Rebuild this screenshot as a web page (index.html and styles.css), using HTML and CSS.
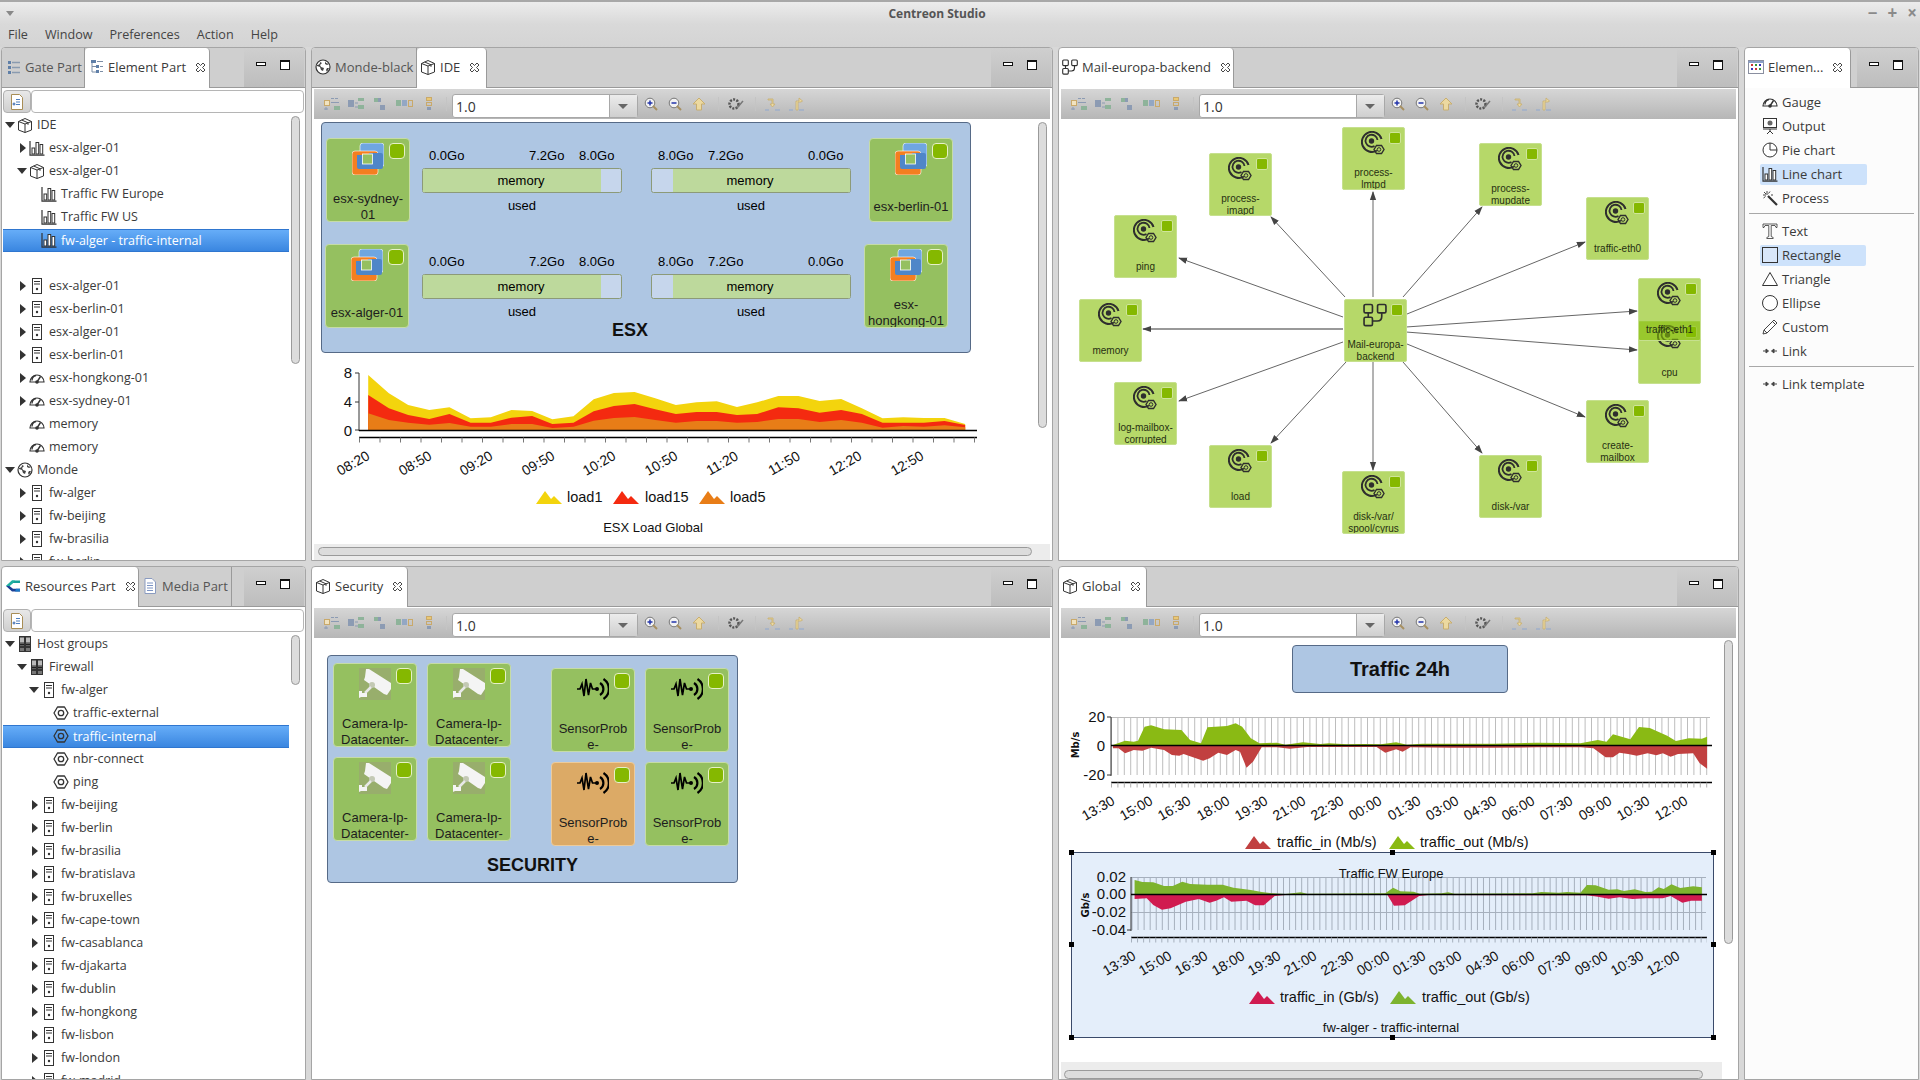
FILE: index.html
```html
<!DOCTYPE html>
<html lang="en">
<head>
  <meta charset="UTF-8" />
  <title>Centreon Studio</title>
  <link rel="stylesheet" href="styles.css">
</head>
<body>

<svg class="defs" width="0" height="0">
  <defs>
    <symbol id="i-close" viewBox="0 0 11 11"><path d="M1 3l2-2 2.500 2.500L8 1l2 2-2.500 2.500L10 8l-2 2-2.500-2.500L3 10 1 8l2.500-2.500z" fill="#fff" stroke="#333" stroke-width=".9"/></symbol>
    <symbol id="i-list" viewBox="0 0 16 16"><g fill="#5f7fa8"><rect x="3" y="2" width="3" height="3"/><rect x="3" y="7" width="3" height="3"/><rect x="3" y="12" width="3" height="3"/></g><path d="M7 3.500h8M7 8.500h8M7 13.500h8" stroke="#8a9bb0" stroke-width="1.300"/></symbol>
    <symbol id="i-tree" viewBox="0 0 16 16"><g fill="#5f7fa8"><rect x="3" y="1" width="5" height="3"/><rect x="8" y="6" width="3" height="3"/><rect x="8" y="11" width="3" height="3"/></g><path d="M4 4v9h4M4 7.500h4M9 2.500h6M12 7.500h3M12 12.500h3" stroke="#7c8ea6" fill="none"/></symbol>
    <symbol id="i-cube" viewBox="0 0 16 16"><path d="M1.500 4.500 8 1.500l6.500 3v8.500L8 15.500 1.500 13zM1.500 4.500 8 7l6.500-2.500M8 7v8.500M4.700 3 11 5.800v2" fill="#fff" stroke="#333" stroke-linejoin="round"/></symbol>
    <symbol id="i-bars" viewBox="0 0 16 16"><path d="M1 1v14.200h14.500" fill="none" stroke="#333" stroke-width="1.200"/><g fill="#fff" stroke="#333"><rect x="3" y="8" width="2.700" height="6"/><rect x="7" y="2.500" width="2.700" height="11.500"/><rect x="11" y="4.500" width="2.700" height="9.500"/></g></symbol>
    <symbol id="i-server" viewBox="0 0 16 16"><rect x="3.500" y=".5" width="9" height="15" fill="#fff" stroke="#333"/><path d="M5 3.500h6M5 6h6" stroke="#333"/><circle cx="8" cy="11" r="1.200" fill="#333"/></symbol>
    <symbol id="i-group" viewBox="0 0 16 16"><rect x="2.500" y=".5" width="5" height="15" fill="#777" stroke="#333"/><rect x="8.500" y=".5" width="5" height="15" fill="#777" stroke="#333"/><path d="M4 2v4M6 2v4M10 2v4M12 2v4" stroke="#fff"/><path d="M3 8.500h4M9 8.500h4M3 11h4M9 11h4" stroke="#222" stroke-width="1.500"/></symbol>
    <symbol id="i-hex" viewBox="0 0 16 16"><path d="M1 8l3.500-6h7L15 8l-3.500 6h-7z" fill="none" stroke="#333" stroke-width="1.300" stroke-linejoin="round"/><circle cx="8" cy="8" r="2.700" fill="none" stroke="#333" stroke-width="1.300"/></symbol>
    <symbol id="i-gauge" viewBox="0 0 16 16"><path d="M1 12a7 7 0 1 1 14 0z" fill="#fff" stroke="#333" stroke-width="1.200"/><path d="M3 10.500a5 5 0 0 1 4-5M8 12l3.500-5.500" fill="none" stroke="#333" stroke-width="1.400"/><circle cx="8" cy="12" r="1.800" fill="#333"/></symbol>
    <symbol id="i-globe" viewBox="0 0 16 16"><circle cx="8" cy="8" r="7" fill="#fff" stroke="#333" stroke-width="1.200"/><path d="M2 6c2 0 3-1 3-3l2 1-2 2 1 2 3 1-1 3-2-1-1-3-3-1zM10 2l1 2 3 1-2 1-2-1zM12 9l2 0-2 4-1-2z" fill="#444"/></symbol>
    <symbol id="i-diagram" viewBox="0 0 16 16"><g fill="none" stroke="#2e2e2e" stroke-width="1.100"><rect x=".7" y="1" width="5.600" height="5.600" rx="1"/><rect x="9.700" y="1" width="5.600" height="5.600" rx="1"/><rect x=".7" y="9.500" width="5.600" height="5.600" rx="1"/><path d="M3.500 6.600v3M12.500 6.600V9q0 3-3 3H6.300"/></g></symbol>
    <symbol id="i-logo" viewBox="0 0 16 16"><path d="M15 2.500H7L1 8l3.500 0L8 5h7z" fill="#16a19a"/><path d="M1 8l6 5.500h8v-2.700H8L4.500 8z" fill="#1c3f94"/><path d="M7 2.500 1 8h3.500L8 5l2-2.500z" fill="#20b0a0"/><path d="M11 10.800h4v2.700h-5z" fill="#1a78c8"/></symbol>
    <symbol id="i-doc" viewBox="0 0 16 16"><path d="M3 .5h7l3.500 3.500v11.500H3z" fill="#fff" stroke="#8a9bc0"/><path d="M5 5h6M5 7.500h6M5 10h6M5 12.500h6" stroke="#7c94c4"/></symbol>
    <symbol id="i-filter" viewBox="0 0 16 16"><path d="M2.500.5h8l3 3v12h-11z" fill="#fff" stroke="#a88d55"/><path d="M7 5.500h4M7 8h4M7 10.500h4" stroke="#4f7fbf"/><path d="M3.500 10h3M5 8.500v3" stroke="#2d5fa8"/></symbol>
    <symbol id="i-output" viewBox="0 0 16 16"><rect x="1.500" y=".5" width="13" height="9" fill="#fff" stroke="#333"/><circle cx="8" cy="5" r="2.500" fill="#666"/><path d="M1 11h14M8 11v2M8 13l-3 3M8 13l3 3" stroke="#333" fill="none"/></symbol>
    <symbol id="i-pie" viewBox="0 0 16 16"><circle cx="8" cy="8" r="7" fill="#fff" stroke="#333"/><path d="M8 1v7h7" fill="none" stroke="#333"/></symbol>
    <symbol id="i-wand" viewBox="0 0 16 16"><path d="M6 6l9 9" stroke="#333" stroke-width="2.200"/><path d="M5 1v4M1 5h3M2 2l2 2M8 1.500l-1.500 2M1.500 8l2-1.500M9 5h2" stroke="#444"/></symbol>
    <symbol id="i-text" viewBox="0 0 16 16"><path d="M1 1h14v3.500h-1L13 2.500H9.200v11l2 1v1H4.800v-1l2-1v-11H3L2 4.500H1z" fill="#fff" stroke="#333" stroke-width=".8"/></symbol>
    <symbol id="i-rect" viewBox="0 0 16 16"><rect x=".5" y=".5" width="15" height="15" fill="#d9e7fa" stroke="#333"/></symbol>
    <symbol id="i-tri" viewBox="0 0 16 16"><path d="M8 1.500l7.500 13H.5z" fill="#fff" stroke="#333"/></symbol>
    <symbol id="i-oval" viewBox="0 0 16 16"><circle cx="8" cy="8" r="7.500" fill="#fff" stroke="#333"/></symbol>
    <symbol id="i-pencil" viewBox="0 0 16 16"><path d="M1 15l1-4L12 1l3 3L5 14zM2 11l3 3M10.500 2.500l3 3" fill="#fff" stroke="#444"/></symbol>
    <symbol id="i-link" viewBox="0 0 16 16"><path d="M1 8h4M11 8h4M6.500 8 4 6v4zM9.500 8 12 6v4z" stroke="#444" fill="#444"/></symbol>
    <symbol id="i-palette" viewBox="0 0 16 16"><rect x=".5" y="1.500" width="15" height="13" fill="#fff" stroke="#8a8fa0"/><path d="M.5 3h15" stroke="#8aa0c8" stroke-width="2"/><g fill="#c33"><rect x="3" y="5" width="2" height="2"/><rect x="7" y="9" width="2" height="2"/></g><g fill="#393"><rect x="7" y="5" width="2" height="2"/><rect x="11" y="9" width="2" height="2"/></g><g fill="#33b"><rect x="11" y="5" width="2" height="2"/><rect x="3" y="9" width="2" height="2"/></g></symbol>

    <symbol id="vmw" viewBox="0 0 32 32"><rect x="8" y="0" width="24" height="24" rx="3" fill="#6fa6e0" stroke="#fff" stroke-width=".6"/><rect x="0" y="8" width="26" height="24" rx="3" fill="#f47f20" stroke="#fff" stroke-width=".6"/><rect x="5" y="10" width="26" height="16" rx="2" fill="#4f86c8"/><rect x="5" y="9" width="12" height="3" fill="#f47f20"/><rect x="10.500" y="11" width="10" height="10" fill="#95c060" stroke="#fff" stroke-width=".8"/></symbol>
    <symbol id="camera" viewBox="0 0 32 32"><rect width="32" height="32" fill="#98ae6c"/><path d="M7 1l3 0 22 14v6l-4 6-3-1L5 12l1-3z" fill="#f4f4f4"/><circle cx="13" cy="17" r="3" fill="#c3c9b4"/><path d="M12 19l-6 6" stroke="#e8e8e8" stroke-width="2.500"/><path d="M0 23h3v2h5v4H2l-2 1z" fill="#f4f4f4"/></symbol>
    <symbol id="sensor" viewBox="0 0 32 22"><path d="M0 11h3l2-5 2 12 2-17 2.500 16 2-12 2 6h5" fill="none" stroke="#000" stroke-width="1.700"/><circle cx="20" cy="11" r="2" fill="#000"/><path d="M23 5a7 7 0 0 1 0 12M26.500 1a12 12 0 0 1 0 20" fill="none" stroke="#000" stroke-width="2.200"/></symbol>
    <symbol id="svc" viewBox="0 0 24 24"><path d="M16 19.500A10 10 0 1 1 20.500 8" fill="none" stroke="#2e2e2e" stroke-width="2"/><path d="M13.500 15A6 6 0 1 1 16.500 9" fill="none" stroke="#2e2e2e" stroke-width="1.800"/><circle cx="10.500" cy="10" r="2.700" fill="#2e2e2e"/><path d="M13 18.500l2.500-4h5l2.500 4-2.500 4h-5z" fill="none" stroke="#2e2e2e" stroke-width="1.400"/><circle cx="18" cy="18.500" r="1.800" fill="none" stroke="#2e2e2e"/></symbol>

    <symbol id="tb-layout" viewBox="0 0 108 14"><g fill="none" stroke="#c9a96a"><rect x=".5" y="3.500" width="5" height="5" fill="#f1e3c0"/><rect x="84.500" y="3.500" width="4" height="6"/><rect x="102.500" y=".5" width="5" height="3" fill="#eac874"/><rect x="102.500" y="5.500" width="5" height="3"/></g><g fill="#8c9bb3"><rect x="7" y="1" width="3" height="1"/><rect x="11" y="1" width="3" height="1"/><rect x="7" y="5" width="8" height="1"/><rect x="24" y="3" width="6" height="7"/><rect x="53" y="1" width="4" height="4"/><rect x="56" y="8" width="5" height="5"/><rect x="103" y="10" width="4" height="3"/></g><g fill="#8eb39a"><rect x="10" y="9" width="6" height="4"/><rect x="34" y="1" width="6" height="3"/><rect x="34" y="8" width="6" height="4"/><rect x="50" y="1" width="4" height="4"/><rect x="72" y="3" width="5" height="6"/></g><g fill="#93a7c4"><rect x="78" y="3" width="5" height="6"/></g><path d="M2 10v3M0 12h4M31 6h3M31 10h3" stroke="#8c9bb3" fill="none"/></symbol>
    <symbol id="tb-zoomin" viewBox="0 0 14 14"><circle cx="6" cy="6" r="4.800" fill="#f2f2f2" stroke="#777"/><path d="M9 9l4 4" stroke="#a89060" stroke-width="2"/><path d="M3.500 6h5M6 3.500v5" stroke="#2233aa" stroke-width="1.500"/></symbol>
    <symbol id="tb-zoomout" viewBox="0 0 14 14"><circle cx="6" cy="6" r="4.800" fill="#f2f2f2" stroke="#777"/><path d="M9 9l4 4" stroke="#a89060" stroke-width="2"/><path d="M3.500 6h5" stroke="#2233aa" stroke-width="1.500"/></symbol>
    <symbol id="tb-up" viewBox="0 0 14 14"><path d="M7 1l6 6H9.500v6h-5V7H1z" fill="#ecd9a0" stroke="#c8ae70"/></symbol>
    <symbol id="tb-gear" viewBox="0 0 16 12"><circle cx="6" cy="6" r="4.500" fill="none" stroke="#555" stroke-width="2.500" stroke-dasharray="2 1.300"/><path d="M9 10l6-7" stroke="#777" stroke-width="1.500"/></symbol>
    <symbol id="tb-down" viewBox="0 0 15 14"><path d="M3 2h5v5h2l-2.500 3L5 7h2V3H3z" fill="#ecd9a0" stroke="#c8ae70" stroke-width=".8"/><path d="M0 13h4M10 13h5" stroke="#8fa8d0"/></symbol>
    <symbol id="tb-back" viewBox="0 0 15 14"><path d="M12 5H9v8H7V4h3V1l3.500 3z" fill="#ecd9a0" stroke="#c8ae70" stroke-width=".8"/><path d="M0 13h4M10 13h5" stroke="#8fa8d0"/></symbol>

    <g id="gauge-left">
      <text x="429" y="160">0.0Go</text><text x="529" y="160">7.2Go</text><text x="579" y="160">8.0Go</text>
      <rect x="422.500" y="168.500" width="199" height="24" rx="2" fill="#c6d6ec" stroke="#8c9a78"/>
      <rect x="423" y="169" width="178" height="23" fill="#bdd99c"/>
      <text x="521" y="185" text-anchor="middle">memory</text><text x="522" y="210" text-anchor="middle">used</text>
    </g>
    <g id="gauge-right">
      <text x="658" y="160">8.0Go</text><text x="708" y="160">7.2Go</text><text x="808" y="160">0.0Go</text>
      <rect x="651.500" y="168.500" width="199" height="24" rx="2" fill="#c6d6ec" stroke="#8c9a78"/>
      <rect x="673" y="169" width="177" height="23" fill="#bdd99c"/>
      <text x="750" y="185" text-anchor="middle">memory</text><text x="751" y="210" text-anchor="middle">used</text>
    </g>
    <marker id="arrow" viewBox="0 0 10 10" refX="9" refY="5" markerWidth="9" markerHeight="9" orient="auto" markerUnits="userSpaceOnUse"><path d="M0 1.500 10 5 0 8.500z" fill="#444"/></marker>
    <path id="peak" d="M0 13 9 0l6 8 3-3 8 8z"/>
  </defs>
</svg>

<header class="titlebar">
  <span class="title-menu"></span>
  <span class="title-text">Centreon Studio</span>
  <div class="win-buttons"><span>−</span><span>+</span><span>×</span></div>
</header>

<nav class="menubar">
  <span>File</span><span>Window</span><span>Preferences</span><span>Action</span><span>Help</span>
</nav>

<main class="workspace">

  <!-- left top -->
  <section class="pane">
    <div class="tabbar">
      <div class="tab tab-gate"><svg class="ic"><use href="#i-list"/></svg>Gate Part</div>
      <div class="tab active tab-element"><svg class="ic"><use href="#i-tree"/></svg>Element Part<svg class="close"><use href="#i-close"/></svg></div>
      <div class="pane-ctrl"><span class="min"></span><span class="max"></span></div>
    </div>
    <div class="view-body">
      <div class="filter"><button class="filter-btn"><svg class="ic"><use href="#i-filter"/></svg></button><input class="filter-input" type="text" /></div>
      <div class="tree">
        <div class="row l0"><span class="arrow open"></span><svg class="ic"><use href="#i-cube"/></svg>IDE</div>
        <div class="row l1"><span class="arrow closed"></span><svg class="ic"><use href="#i-bars"/></svg>esx-alger-01</div>
        <div class="row l1"><span class="arrow open"></span><svg class="ic"><use href="#i-cube"/></svg>esx-alger-01</div>
        <div class="row l2"><span class="arrow"></span><svg class="ic"><use href="#i-bars"/></svg>Traffic FW Europe</div>
        <div class="row l2"><span class="arrow"></span><svg class="ic"><use href="#i-bars"/></svg>Traffic FW US</div>
        <div class="row l2 selected"><span class="arrow"></span><svg class="ic"><use href="#i-bars"/></svg>fw-alger - traffic-internal</div>
        <div class="row l1"></div>
        <div class="row l1"><span class="arrow closed"></span><svg class="ic"><use href="#i-server"/></svg>esx-alger-01</div>
        <div class="row l1"><span class="arrow closed"></span><svg class="ic"><use href="#i-server"/></svg>esx-berlin-01</div>
        <div class="row l1"><span class="arrow closed"></span><svg class="ic"><use href="#i-server"/></svg>esx-alger-01</div>
        <div class="row l1"><span class="arrow closed"></span><svg class="ic"><use href="#i-server"/></svg>esx-berlin-01</div>
        <div class="row l1"><span class="arrow closed"></span><svg class="ic"><use href="#i-gauge"/></svg>esx-hongkong-01</div>
        <div class="row l1"><span class="arrow closed"></span><svg class="ic"><use href="#i-gauge"/></svg>esx-sydney-01</div>
        <div class="row l1"><span class="arrow"></span><svg class="ic"><use href="#i-gauge"/></svg>memory</div>
        <div class="row l1"><span class="arrow"></span><svg class="ic"><use href="#i-gauge"/></svg>memory</div>
        <div class="row l0"><span class="arrow open"></span><svg class="ic"><use href="#i-globe"/></svg>Monde</div>
        <div class="row l1"><span class="arrow closed"></span><svg class="ic"><use href="#i-server"/></svg>fw-alger</div>
        <div class="row l1"><span class="arrow closed"></span><svg class="ic"><use href="#i-server"/></svg>fw-beijing</div>
        <div class="row l1"><span class="arrow closed"></span><svg class="ic"><use href="#i-server"/></svg>fw-brasilia</div>
        <div class="row l1"><span class="arrow closed"></span><svg class="ic"><use href="#i-server"/></svg>fw-berlin</div>
      </div>
      <div class="scroll-v sv-left-top"></div>
    </div>
  </section>

  <!-- center top -->
  <section class="pane">
    <div class="tabbar">
      <div class="tab tab-monde"><svg class="ic"><use href="#i-globe"/></svg>Monde-black</div>
      <div class="tab active tab-ide"><svg class="ic"><use href="#i-cube"/></svg>IDE<svg class="close"><use href="#i-close"/></svg></div>
      <div class="pane-ctrl"><span class="min"></span><span class="max"></span></div>
    </div>
    <div class="view-body">
      <div class="toolbar">
        <svg class="tb-layout"><use href="#tb-layout"/></svg><span class="tb-sep first"></span>
        <div class="combo"><span class="combo-value">1.0</span><span class="combo-arrow"></span></div>
        <svg class="tb"><use href="#tb-zoomin"/></svg><svg class="tb"><use href="#tb-zoomout"/></svg><svg class="tb"><use href="#tb-up"/></svg>
        <span class="tb-sep"></span><svg class="tb-gear"><use href="#tb-gear"/></svg><span class="tb-sep"></span>
        <svg class="tb-move"><use href="#tb-down"/></svg><svg class="tb-move"><use href="#tb-back"/></svg>
      </div>
      <div class="canvas">
        <div class="group g-esx"></div>
        <div class="node big n-sydney"><svg class="node-icon"><use href="#vmw"/></svg><span class="status"></span><div class="node-label">esx-sydney-<br>01</div></div>
        <div class="node big n-alger"><svg class="node-icon"><use href="#vmw"/></svg><span class="status"></span><div class="node-label">esx-alger-01</div></div>
        <div class="node big n-berlin"><svg class="node-icon"><use href="#vmw"/></svg><span class="status"></span><div class="node-label">esx-berlin-01</div></div>
        <div class="node big n-hongkong"><svg class="node-icon"><use href="#vmw"/></svg><span class="status"></span><div class="node-label">esx-<br>hongkong-01</div></div>

        <svg class="overlay" viewBox="314 119 736 442" width="736" height="442">
          <g class="diagram-text">
            <use href="#gauge-left"/><use href="#gauge-right"/>
            <use href="#gauge-left" y="106"/><use href="#gauge-right" y="106"/>
            <text class="group-title" x="630" y="336" text-anchor="middle">ESX</text>
          </g>
          <g transform="translate(320 350) scale(.4592 .3333)">
            <polygon fill="#f3d40d" points="105,75 150,130 192,165 238,180 282,172 328,205 372,202 417,180 462,183 506,208 552,199 596,148 640,129 685,126 730,145 775,165 820,157 864,154 908,171 952,157 998,138 1042,138 1088,153 1135,147 1180,175 1225,205 1270,202 1315,204 1360,204 1405,222 1405,240 105,240"/>
            <polygon fill="#f42a10" points="105,135 150,175 192,195 238,207 282,192 328,218 372,218 417,203 462,198 506,222 552,218 596,184 640,168 685,162 730,178 775,192 820,186 864,186 908,195 952,192 998,172 1042,175 1088,188 1135,180 1180,192 1225,218 1270,218 1315,218 1360,213 1405,225 1405,240 105,240"/>
            <polygon fill="#e87d17" points="105,190 150,210 192,218 238,224 282,219 328,230 372,230 417,222 462,222 506,234 552,230 596,212 640,204 685,201 730,210 775,218 820,213 864,213 908,218 952,216 998,207 1042,207 1088,216 1135,210 1180,218 1225,233 1270,228 1315,230 1360,226 1405,232 1405,240 105,240"/>
          </g>
          <g class="axis">
            <path d="M359 373V431M355 373h4M355 402h4M355 430h4"/>
            <path class="axis-main" d="M359 430.500H977M359 437.500H977"/>
            <line class="ticks" x1="359" y1="440" x2="977" y2="440" stroke-width="5" stroke-dasharray="1 19.500"/>
          </g>
          <g class="chart-text">
            <text class="yl" x="352" y="378">8</text><text class="yl" x="352" y="407">4</text><text class="yl" x="352" y="436">0</text>
            <text class="xl" transform="rotate(-30 353 463)" x="353" y="468">08:20</text>
            <text class="xl" transform="rotate(-30 415 463)" x="415" y="468">08:50</text>
            <text class="xl" transform="rotate(-30 476 463)" x="476" y="468">09:20</text>
            <text class="xl" transform="rotate(-30 538 463)" x="538" y="468">09:50</text>
            <text class="xl" transform="rotate(-30 599 463)" x="599" y="468">10:20</text>
            <text class="xl" transform="rotate(-30 661 463)" x="661" y="468">10:50</text>
            <text class="xl" transform="rotate(-30 722 463)" x="722" y="468">11:20</text>
            <text class="xl" transform="rotate(-30 784 463)" x="784" y="468">11:50</text>
            <text class="xl" transform="rotate(-30 845 463)" x="845" y="468">12:20</text>
            <text class="xl" transform="rotate(-30 907 463)" x="907" y="468">12:50</text>
            <use href="#peak" x="536" y="491" fill="#f3d40d"/><text class="lg" x="567" y="502">load1</text>
            <use href="#peak" x="613" y="491" fill="#f42a10"/><text class="lg" x="645" y="502">load15</text>
            <use href="#peak" x="699" y="491" fill="#e87d17"/><text class="lg" x="730" y="502">load5</text>
            <text class="cap" x="653" y="532">ESX Load Global</text>
          </g>
        </svg>

        <div class="scroll-v sv-center"></div>
        <div class="band"></div>
        <div class="scroll-h sh-center"></div>
      </div>
    </div>
  </section>

  <!-- right top -->
  <section class="pane">
    <div class="tabbar">
      <div class="tab active tab-mail"><svg class="ic"><use href="#i-diagram"/></svg>Mail-europa-backend<svg class="close"><use href="#i-close"/></svg></div>
      <div class="pane-ctrl"><span class="min"></span><span class="max"></span></div>
    </div>
    <div class="view-body">
      <div class="toolbar">
        <svg class="tb-layout"><use href="#tb-layout"/></svg><span class="tb-sep first"></span>
        <div class="combo"><span class="combo-value">1.0</span><span class="combo-arrow"></span></div>
        <svg class="tb"><use href="#tb-zoomin"/></svg><svg class="tb"><use href="#tb-zoomout"/></svg><svg class="tb"><use href="#tb-up"/></svg>
        <span class="tb-sep"></span><svg class="tb-gear"><use href="#tb-gear"/></svg><span class="tb-sep"></span>
        <svg class="tb-move"><use href="#tb-down"/></svg><svg class="tb-move"><use href="#tb-back"/></svg>
      </div>
      <div class="canvas">
        <svg class="overlay" viewBox="1061 119 675 442" width="675" height="442">
          <g class="edges">
            <line x1="1373" y1="297" x2="1373" y2="192" marker-end="url(#arrow)"/>
            <line x1="1345" y1="297" x2="1271" y2="217" marker-end="url(#arrow)"/>
            <line x1="1403" y1="297" x2="1482" y2="207" marker-end="url(#arrow)"/>
            <line x1="1407" y1="314" x2="1585" y2="242" marker-end="url(#arrow)"/>
            <line x1="1343" y1="317" x2="1179" y2="258" marker-end="url(#arrow)"/>
            <line class="heavy" x1="1343" y1="329" x2="1143" y2="329" marker-end="url(#arrow)"/>
            <line x1="1406" y1="327" x2="1637" y2="311" marker-end="url(#arrow)"/>
            <line x1="1406" y1="332" x2="1637" y2="350" marker-end="url(#arrow)"/>
            <line x1="1343" y1="342" x2="1179" y2="401" marker-end="url(#arrow)"/>
            <line x1="1407" y1="344" x2="1585" y2="417" marker-end="url(#arrow)"/>
            <line x1="1346" y1="362" x2="1271" y2="443" marker-end="url(#arrow)"/>
            <line x1="1373" y1="362" x2="1373" y2="470" marker-end="url(#arrow)"/>
            <line x1="1403" y1="362" x2="1482" y2="453" marker-end="url(#arrow)"/>
          </g>
        </svg>
        <div class="node small s-lmtpd"><svg class="svc-icon"><use href="#svc"/></svg><span class="status"></span><div class="node-label">process-<br>lmtpd</div></div>
        <div class="node small s-imapd"><svg class="svc-icon"><use href="#svc"/></svg><span class="status"></span><div class="node-label">process-<br>imapd</div></div>
        <div class="node small s-mupdate"><svg class="svc-icon"><use href="#svc"/></svg><span class="status"></span><div class="node-label">process-<br>mupdate</div></div>
        <div class="node small s-eth0"><svg class="svc-icon"><use href="#svc"/></svg><span class="status"></span><div class="node-label">traffic-eth0</div></div>
        <div class="node small s-ping"><svg class="svc-icon"><use href="#svc"/></svg><span class="status"></span><div class="node-label">ping</div></div>
        <div class="node small s-memory"><svg class="svc-icon"><use href="#svc"/></svg><span class="status"></span><div class="node-label">memory</div></div>
        <div class="node small s-mail"><svg class="svc-icon"><use href="#i-diagram"/></svg><span class="status"></span><div class="node-label">Mail-europa-<br>backend</div></div>
        <div class="node small s-cpu"><svg class="svc-icon"><use href="#svc"/></svg><span class="status"></span><div class="node-label">cpu</div></div>
        <div class="node small s-eth1"><svg class="svc-icon"><use href="#svc"/></svg><span class="status"></span><div class="node-label">traffic-eth1</div></div>
        <div class="node small s-log"><svg class="svc-icon"><use href="#svc"/></svg><span class="status"></span><div class="node-label">log-mailbox-<br>corrupted</div></div>
        <div class="node small s-create"><svg class="svc-icon"><use href="#svc"/></svg><span class="status"></span><div class="node-label">create-<br>mailbox</div></div>
        <div class="node small s-load"><svg class="svc-icon"><use href="#svc"/></svg><span class="status"></span><div class="node-label">load</div></div>
        <div class="node small s-cyrus"><svg class="svc-icon"><use href="#svc"/></svg><span class="status"></span><div class="node-label">disk-/var/<br>spool/cyrus</div></div>
        <div class="node small s-var"><svg class="svc-icon"><use href="#svc"/></svg><span class="status"></span><div class="node-label">disk-/var</div></div>
      </div>
    </div>
  </section>

  <!-- palette, full height -->
  <aside class="pane palette-pane">
    <div class="tabbar">
      <div class="tab active tab-palette"><svg class="ic"><use href="#i-palette"/></svg>Elemen...<svg class="close"><use href="#i-close"/></svg></div>
      <div class="pane-ctrl"><span class="min"></span><span class="max"></span></div>
    </div>
    <div class="palette">
      <div class="pal-item"><svg class="ic"><use href="#i-gauge"/></svg>Gauge</div>
      <div class="pal-item"><svg class="ic"><use href="#i-output"/></svg>Output</div>
      <div class="pal-item"><svg class="ic"><use href="#i-pie"/></svg>Pie chart</div>
      <div class="pal-item hl hl-line"><svg class="ic"><use href="#i-bars"/></svg>Line chart</div>
      <div class="pal-item"><svg class="ic"><use href="#i-wand"/></svg>Process</div>
      <div class="pal-sep"></div>
      <div class="pal-item"><svg class="ic"><use href="#i-text"/></svg>Text</div>
      <div class="pal-item hl hl-rect"><svg class="ic"><use href="#i-rect"/></svg>Rectangle</div>
      <div class="pal-item"><svg class="ic"><use href="#i-tri"/></svg>Triangle</div>
      <div class="pal-item"><svg class="ic"><use href="#i-oval"/></svg>Ellipse</div>
      <div class="pal-item"><svg class="ic"><use href="#i-pencil"/></svg>Custom</div>
      <div class="pal-item"><svg class="ic"><use href="#i-link"/></svg>Link</div>
      <div class="pal-sep"></div>
      <div class="pal-item"><svg class="ic"><use href="#i-link"/></svg>Link template</div>
    </div>
  </aside>

  <!-- left bottom -->
  <section class="pane">
    <div class="tabbar">
      <div class="tab active tab-res"><svg class="ic"><use href="#i-logo"/></svg>Resources Part<svg class="close"><use href="#i-close"/></svg></div>
      <div class="tab tab-media"><svg class="ic"><use href="#i-doc"/></svg>Media Part</div>
      <div class="pane-ctrl"><span class="min"></span><span class="max"></span></div>
    </div>
    <div class="view-body">
      <div class="filter"><button class="filter-btn"><svg class="ic"><use href="#i-filter"/></svg></button><input class="filter-input" type="text" /></div>
      <div class="tree">
        <div class="row l0"><span class="arrow open"></span><svg class="ic"><use href="#i-group"/></svg>Host groups</div>
        <div class="row l1"><span class="arrow open"></span><svg class="ic"><use href="#i-group"/></svg>Firewall</div>
        <div class="row l2"><span class="arrow open"></span><svg class="ic"><use href="#i-server"/></svg>fw-alger</div>
        <div class="row l3"><span class="arrow"></span><svg class="ic"><use href="#i-hex"/></svg>traffic-external</div>
        <div class="row l3 selected"><span class="arrow"></span><svg class="ic"><use href="#i-hex"/></svg>traffic-internal</div>
        <div class="row l3"><span class="arrow"></span><svg class="ic"><use href="#i-hex"/></svg>nbr-connect</div>
        <div class="row l3"><span class="arrow"></span><svg class="ic"><use href="#i-hex"/></svg>ping</div>
        <div class="row l2"><span class="arrow closed"></span><svg class="ic"><use href="#i-server"/></svg>fw-beijing</div>
        <div class="row l2"><span class="arrow closed"></span><svg class="ic"><use href="#i-server"/></svg>fw-berlin</div>
        <div class="row l2"><span class="arrow closed"></span><svg class="ic"><use href="#i-server"/></svg>fw-brasilia</div>
        <div class="row l2"><span class="arrow closed"></span><svg class="ic"><use href="#i-server"/></svg>fw-bratislava</div>
        <div class="row l2"><span class="arrow closed"></span><svg class="ic"><use href="#i-server"/></svg>fw-bruxelles</div>
        <div class="row l2"><span class="arrow closed"></span><svg class="ic"><use href="#i-server"/></svg>fw-cape-town</div>
        <div class="row l2"><span class="arrow closed"></span><svg class="ic"><use href="#i-server"/></svg>fw-casablanca</div>
        <div class="row l2"><span class="arrow closed"></span><svg class="ic"><use href="#i-server"/></svg>fw-djakarta</div>
        <div class="row l2"><span class="arrow closed"></span><svg class="ic"><use href="#i-server"/></svg>fw-dublin</div>
        <div class="row l2"><span class="arrow closed"></span><svg class="ic"><use href="#i-server"/></svg>fw-hongkong</div>
        <div class="row l2"><span class="arrow closed"></span><svg class="ic"><use href="#i-server"/></svg>fw-lisbon</div>
        <div class="row l2"><span class="arrow closed"></span><svg class="ic"><use href="#i-server"/></svg>fw-london</div>
        <div class="row l2"><span class="arrow closed"></span><svg class="ic"><use href="#i-server"/></svg>fw-madrid</div>
      </div>
      <div class="scroll-v sv-left-bottom"></div>
    </div>
  </section>

  <!-- center bottom -->
  <section class="pane">
    <div class="tabbar">
      <div class="tab active tab-security"><svg class="ic"><use href="#i-cube"/></svg>Security<svg class="close"><use href="#i-close"/></svg></div>
      <div class="pane-ctrl"><span class="min"></span><span class="max"></span></div>
    </div>
    <div class="view-body">
      <div class="toolbar">
        <svg class="tb-layout"><use href="#tb-layout"/></svg><span class="tb-sep first"></span>
        <div class="combo"><span class="combo-value">1.0</span><span class="combo-arrow"></span></div>
        <svg class="tb"><use href="#tb-zoomin"/></svg><svg class="tb"><use href="#tb-zoomout"/></svg><svg class="tb"><use href="#tb-up"/></svg>
        <span class="tb-sep"></span><svg class="tb-gear"><use href="#tb-gear"/></svg><span class="tb-sep"></span>
        <svg class="tb-move"><use href="#tb-down"/></svg><svg class="tb-move"><use href="#tb-back"/></svg>
      </div>
      <div class="canvas">
        <div class="group g-security"></div>
        <div class="node big c-1"><svg class="node-icon"><use href="#camera"/></svg><span class="status"></span><div class="node-label">Camera-Ip-<br>Datacenter-</div></div>
        <div class="node big c-2"><svg class="node-icon"><use href="#camera"/></svg><span class="status"></span><div class="node-label">Camera-Ip-<br>Datacenter-</div></div>
        <div class="node big c-3"><svg class="node-icon"><use href="#camera"/></svg><span class="status"></span><div class="node-label">Camera-Ip-<br>Datacenter-</div></div>
        <div class="node big c-4"><svg class="node-icon"><use href="#camera"/></svg><span class="status"></span><div class="node-label">Camera-Ip-<br>Datacenter-</div></div>
        <div class="node big p-1"><svg class="sensor-icon"><use href="#sensor"/></svg><span class="status"></span><div class="node-label">SensorProb<br>e-</div></div>
        <div class="node big p-2"><svg class="sensor-icon"><use href="#sensor"/></svg><span class="status"></span><div class="node-label">SensorProb<br>e-</div></div>
        <div class="node big warn p-3"><svg class="sensor-icon"><use href="#sensor"/></svg><span class="status"></span><div class="node-label">SensorProb<br>e-</div></div>
        <div class="node big p-4"><svg class="sensor-icon"><use href="#sensor"/></svg><span class="status"></span><div class="node-label">SensorProb<br>e-</div></div>
        <div class="group-label l-security">SECURITY</div>
      </div>
    </div>
  </section>

  <!-- right bottom -->
  <section class="pane">
    <div class="tabbar">
      <div class="tab active tab-global"><svg class="ic"><use href="#i-cube"/></svg>Global<svg class="close"><use href="#i-close"/></svg></div>
      <div class="pane-ctrl"><span class="min"></span><span class="max"></span></div>
    </div>
    <div class="view-body">
      <div class="toolbar">
        <svg class="tb-layout"><use href="#tb-layout"/></svg><span class="tb-sep first"></span>
        <div class="combo"><span class="combo-value">1.0</span><span class="combo-arrow"></span></div>
        <svg class="tb"><use href="#tb-zoomin"/></svg><svg class="tb"><use href="#tb-zoomout"/></svg><svg class="tb"><use href="#tb-up"/></svg>
        <span class="tb-sep"></span><svg class="tb-gear"><use href="#tb-gear"/></svg><span class="tb-sep"></span>
        <svg class="tb-move"><use href="#tb-down"/></svg><svg class="tb-move"><use href="#tb-back"/></svg>
      </div>
      <div class="canvas">
        <div class="group title-box">Traffic 24h</div>
        <svg class="overlay" viewBox="1061 638 675 442" width="675" height="442">
          <!-- Traffic 24h chart -->
          <line class="grid" x1="1111" y1="746" x2="1710" y2="746" stroke-width="58" stroke-dasharray="1 5.400"/>
          <path class="grid-h" d="M1111 717.500H1710"/>
          <g transform="translate(1060 640) scale(.4337 .3333)">
            <polygon fill="#8aba14" points="122,315 150,302 170,305 180,302 195,260 210,256 240,268 280,270 300,300 325,310 340,262 385,258 405,250 420,260 440,295 460,310 500,308 520,314 560,307 600,312 620,310 660,313 700,312 740,313 775,307 800,314 835,311 900,311 1000,311 1100,308 1200,310 1240,300 1260,305 1275,283 1315,298 1335,261 1360,264 1400,287 1420,303 1450,295 1480,296 1492,290 1492,317 122,317"/>
            <polygon fill="#c14040" points="122,317 122,325 135,325 150,340 170,330 190,332 210,323 240,330 258,345 275,347 285,342 330,362 345,355 365,338 385,345 405,330 415,335 430,383 445,365 465,322 500,322 530,326 570,321 730,321 750,338 775,328 790,335 808,322 900,323 1000,323 1100,322 1200,322 1230,325 1258,352 1275,352 1290,338 1310,342 1330,347 1355,340 1375,346 1390,340 1408,350 1425,342 1460,340 1475,370 1492,386 1492,317"/>
          </g>
          <g class="axis">
            <path d="M1111 717V776M1107 717h4M1107 775h4"/>
            <path class="axis-main" d="M1111 745.500H1712M1111 782.500H1712"/>
          </g>
          <line class="ticks light" x1="1111" y1="785" x2="1712" y2="785" stroke-width="5" stroke-dasharray="1 5.400"/>
          <g class="chart-text">
            <text class="yl" x="1105" y="722">20</text><text class="yl" x="1105" y="751">0</text><text class="yl" x="1105" y="780">-20</text>
            <text class="unit" transform="rotate(-90 1075 745)" x="1075" y="749">Mb/s</text>
            <text class="xl" transform="rotate(-30 1098 808)" x="1098" y="813">13:30</text>
            <text class="xl" transform="rotate(-30 1136 808)" x="1136" y="813">15:00</text>
            <text class="xl" transform="rotate(-30 1174 808)" x="1174" y="813">16:30</text>
            <text class="xl" transform="rotate(-30 1213 808)" x="1213" y="813">18:00</text>
            <text class="xl" transform="rotate(-30 1251 808)" x="1251" y="813">19:30</text>
            <text class="xl" transform="rotate(-30 1289 808)" x="1289" y="813">21:00</text>
            <text class="xl" transform="rotate(-30 1327 808)" x="1327" y="813">22:30</text>
            <text class="xl" transform="rotate(-30 1365 808)" x="1365" y="813">00:00</text>
            <text class="xl" transform="rotate(-30 1404 808)" x="1404" y="813">01:30</text>
            <text class="xl" transform="rotate(-30 1442 808)" x="1442" y="813">03:00</text>
            <text class="xl" transform="rotate(-30 1480 808)" x="1480" y="813">04:30</text>
            <text class="xl" transform="rotate(-30 1518 808)" x="1518" y="813">06:00</text>
            <text class="xl" transform="rotate(-30 1556 808)" x="1556" y="813">07:30</text>
            <text class="xl" transform="rotate(-30 1595 808)" x="1595" y="813">09:00</text>
            <text class="xl" transform="rotate(-30 1633 808)" x="1633" y="813">10:30</text>
            <text class="xl" transform="rotate(-30 1671 808)" x="1671" y="813">12:00</text>
            <use href="#peak" x="1245" y="836" fill="#c14040"/><text class="lg" x="1277" y="847">traffic_in (Mb/s)</text>
            <use href="#peak" x="1389" y="836" fill="#8aba14"/><text class="lg" x="1420" y="847">traffic_out (Mb/s)</text>
          </g>

          <!-- selected chart -->
          <rect class="sel-box" x="1071.500" y="852.500" width="642" height="185"/>
          <line class="grid dim" x1="1131.500" y1="903.500" x2="1706" y2="903.500" stroke-width="53" stroke-dasharray="1 5.060"/>
          <path class="grid-h dim" d="M1131 877.500H1706M1131 912.500H1706"/>
          <g transform="translate(1060 840) scale(.4337 .3333)">
            <polygon fill="#d01b50" points="172,163 172,177 200,175 215,195 235,209 255,205 290,185 320,177 345,188 360,182 378,172 395,185 430,182 450,196 470,196 495,168 520,165 755,165 770,197 795,196 828,168 850,165 1215,166 1240,170 1265,176 1290,172 1320,177 1350,175 1390,175 1408,168 1435,188 1455,182 1480,182 1480,163"/>
            <polygon fill="#7db32e" points="172,120 190,126 215,127 240,138 260,138 282,125 300,132 340,134 375,134 400,143 440,150 465,156 490,160 520,162 555,157 570,161 750,160 768,143 785,154 815,155 830,161 880,160 895,157 910,161 1090,160 1110,156 1150,158 1170,156 1200,158 1215,135 1235,136 1265,149 1285,148 1300,153 1325,148 1350,156 1365,155 1380,142 1392,147 1410,133 1430,144 1460,139 1480,142 1480,163 172,163"/>
          </g>
          <g class="axis">
            <path d="M1131 877V931M1127 930h4"/>
            <path class="axis-main" d="M1131 894.500H1707M1131 937.500H1707"/>
          </g>
          <line class="ticks dim" x1="1131" y1="940" x2="1707" y2="940" stroke-width="5" stroke-dasharray="1 5.060"/>
          <g class="chart-text">
            <text class="cap" x="1391" y="878">Traffic FW Europe</text>
            <text class="yl" x="1126" y="882">0.02</text><text class="yl" x="1126" y="899">0.00</text><text class="yl" x="1126" y="917">-0.02</text><text class="yl" x="1126" y="935">-0.04</text>
            <text class="unit" transform="rotate(-90 1085 905)" x="1085" y="909">Gb/s</text>
            <text class="xl" transform="rotate(-30 1119 963)" x="1119" y="968">13:30</text>
            <text class="xl" transform="rotate(-30 1155 963)" x="1155" y="968">15:00</text>
            <text class="xl" transform="rotate(-30 1191 963)" x="1191" y="968">16:30</text>
            <text class="xl" transform="rotate(-30 1228 963)" x="1228" y="968">18:00</text>
            <text class="xl" transform="rotate(-30 1264 963)" x="1264" y="968">19:30</text>
            <text class="xl" transform="rotate(-30 1300 963)" x="1300" y="968">21:00</text>
            <text class="xl" transform="rotate(-30 1337 963)" x="1337" y="968">22:30</text>
            <text class="xl" transform="rotate(-30 1373 963)" x="1373" y="968">00:00</text>
            <text class="xl" transform="rotate(-30 1409 963)" x="1409" y="968">01:30</text>
            <text class="xl" transform="rotate(-30 1445 963)" x="1445" y="968">03:00</text>
            <text class="xl" transform="rotate(-30 1482 963)" x="1482" y="968">04:30</text>
            <text class="xl" transform="rotate(-30 1518 963)" x="1518" y="968">06:00</text>
            <text class="xl" transform="rotate(-30 1554 963)" x="1554" y="968">07:30</text>
            <text class="xl" transform="rotate(-30 1591 963)" x="1591" y="968">09:00</text>
            <text class="xl" transform="rotate(-30 1627 963)" x="1627" y="968">10:30</text>
            <text class="xl" transform="rotate(-30 1663 963)" x="1663" y="968">12:00</text>
            <use href="#peak" x="1249" y="991" fill="#d01b50"/><text class="lg" x="1280" y="1002">traffic_in (Gb/s)</text>
            <use href="#peak" x="1390" y="991" fill="#7db32e"/><text class="lg" x="1422" y="1002">traffic_out (Gb/s)</text>
            <text class="cap" x="1391" y="1032">fw-alger - traffic-internal</text>
          </g>
          <g class="handles">
            <rect x="1069" y="850" width="5" height="5"/><rect x="1390" y="850" width="5" height="5"/><rect x="1711" y="850" width="5" height="5"/>
            <rect x="1069" y="942" width="5" height="5"/><rect x="1711" y="942" width="5" height="5"/>
            <rect x="1069" y="1035" width="5" height="5"/><rect x="1390" y="1035" width="5" height="5"/><rect x="1711" y="1035" width="5" height="5"/>
          </g>
        </svg>
        <div class="scroll-v sv-global"></div>
        <div class="band band-global"></div>
        <div class="scroll-h sh-global"></div>
      </div>
    </div>
  </section>

</main>

</body>
</html>
```

FILE: styles.css
```css
body {
  margin: 0;
  width: 1920px;
  height: 1080px;
  overflow: hidden;
  background: #d8d8d8;
  font-family: "Open Sans", "Noto Sans", sans-serif;
  font-size: 13px;
  color: #3a3a3a;
}

.defs {
  position: absolute;
}

/* title + menu */
.titlebar {
  position: relative;
  height: 24px;
  box-sizing: border-box;
  border-top: 2px solid #a8a8a8;
  background: linear-gradient(#ececec, #d9d9d9);
  padding-right: 46px;
  display: flex;
  justify-content: center;
  align-items: center;
  font-size: 12px;
  font-weight: bold;
  color: #555;
}

.title-menu {
  position: absolute;
  left: 6px;
  top: 9px;
  border: 4px solid transparent;
  border-top: 5px solid #888;
}

.win-buttons {
  position: absolute;
  right: 3px;
  top: 1px;
  display: flex;
  gap: 10px;
  font-size: 17px;
  line-height: 20px;
  color: #8a8a8a;
}

.menubar {
  height: 23px;
  box-sizing: border-box;
  padding: 0 0 2px 8px;
  display: flex;
  align-items: center;
  gap: 17px;
  background: linear-gradient(#d9d9d9, #d4d4d4);
  font-size: 12.6px;
  color: #444;
}

.workspace {
  display: grid;
  grid-template-columns: 305px 742px 681px 175px;
  grid-template-rows: 514px 514px;
  gap: 5px;
  padding-left: 1px;
}

/* panes */
.pane {
  display: flex;
  flex-direction: column;
  min-height: 0;
  box-sizing: border-box;
  border: 1px solid #a5a5a5;
  border-radius: 4px 4px 0 0;
  background: #fff;
  overflow: hidden;
}

.palette-pane {
  grid-column: 4;
  grid-row: 1 / 3;
  background: #fcfcfc;
}

.tabbar {
  display: flex;
  height: 40px;
  flex-shrink: 0;
  box-sizing: border-box;
  background: #cfcfcf;
  border-bottom: 1px solid #9a9a9a;
}

.tab {
  display: flex;
  align-items: center;
  gap: 4px;
  box-sizing: border-box;
  padding-left: 3px;
  padding-bottom: 2px;
  border-right: 1px solid #9a9a9a;
  color: #555;
  white-space: nowrap;
}

.tab.active {
  background: #fff;
  height: 40px;
  color: #3a3a3a;
  border-radius: 4px 4px 0 0;
}

.close {
  width: 11px;
  height: 11px;
  margin-left: 5px;
  flex-shrink: 0;
}

.tab-gate { width: 83px; }
.tab-element { width: 125px; }
.tab-monde { width: 105px; }
.tab-ide { width: 70px; }
.tab-mail { width: 175px; }
.tab-res { width: 137px; }
.tab-media { width: 93px; }
.tab-security { width: 96px; }
.tab-global { width: 88px; }
.tab-palette { width: 106px; }

.pane-ctrl {
  margin-left: auto;
  margin-right: 1px;
  width: 60px;
  height: 39px;
  display: flex;
  align-items: center;
  gap: 14px;
  padding-left: 12px;
  box-sizing: border-box;
  background: linear-gradient(#cfcfcf, #bdbdbd);
}

.min {
  width: 10px;
  height: 4px;
  box-sizing: border-box;
  border: 1px solid #111;
  background: #fff;
  margin-top: -8px;
}

.max {
  width: 10px;
  height: 10px;
  box-sizing: border-box;
  border: 1px solid #111;
  border-top-width: 2px;
  background: #fff;
  margin-top: -6px;
}

.view-body {
  position: relative;
  flex: 1;
  min-height: 0;
  display: flex;
  flex-direction: column;
  padding: 1px 2px 0;
  background: #fff;
}

/* trees */
.filter {
  display: flex;
  height: 25px;
  flex-shrink: 0;
  box-sizing: border-box;
  padding: 1px 0;
  margin: 0 -1px;
}

.filter-btn {
  width: 28px;
  padding: 0;
  display: flex;
  align-items: center;
  justify-content: center;
  border: 1px solid #b0b0b0;
  border-radius: 4px;
  background: linear-gradient(#e8e8e8, #cfcfcf);
}

.filter-input {
  flex: 1;
  min-width: 0;
  box-sizing: border-box;
  border: 1px solid #b5b5b5;
  border-radius: 4px;
  background: #fff;
}

.tree {
  flex: 1;
  min-height: 0;
  width: 286px;
  margin-left: -1px;
  overflow: hidden;
  font-size: 12.5px;
}

.row {
  height: 23px;
  display: flex;
  align-items: center;
  box-sizing: border-box;
  padding-bottom: 2px;
  color: #3a3a3a;
  white-space: nowrap;
}

.row.l0 { padding-left: 0; }
.row.l1 { padding-left: 12px; }
.row.l2 { padding-left: 24px; }
.row.l3 { padding-left: 36px; }

.row.selected {
  background: linear-gradient(#66adf8, #3a86e0);
  border-top: 1px solid #2f76cf;
  border-bottom: 1px solid #2f76cf;
  padding-bottom: 1px;
  color: #fff;
}

.arrow {
  width: 14px;
  height: 12px;
  flex-shrink: 0;
  position: relative;
}

.arrow.open::before {
  content: "";
  position: absolute;
  left: 2px;
  top: 3px;
  border: 5px solid transparent;
  border-top: 6px solid #333;
  border-bottom: 0;
}

.arrow.closed::before {
  content: "";
  position: absolute;
  left: 5px;
  top: 1px;
  border: 5px solid transparent;
  border-left: 6px solid #333;
  border-right: 0;
}

.ic {
  width: 16px;
  height: 16px;
  flex-shrink: 0;
}

.row .ic {
  margin-right: 4px;
}

/* scrollbars */
.scroll-v,
.scroll-h {
  position: absolute;
  box-sizing: border-box;
  border: 1px solid #9a9a9a;
  border-radius: 5px;
  background: #dcdcdc;
}

.sv-left-top {
  left: 289px;
  top: 28px;
  width: 9px;
  height: 248px;
}

.sv-left-bottom {
  left: 289px;
  top: 28px;
  width: 9px;
  height: 50px;
}

.sv-center {
  left: 724px;
  top: 3px;
  width: 9px;
  height: 306px;
}

.sh-center {
  left: 4px;
  top: 428px;
  width: 714px;
  height: 9px;
}

.band {
  position: absolute;
  left: 0;
  right: 0;
  top: 425px;
  bottom: 0;
  background: #ececec;
}

.canvas .scroll-h {
  z-index: 1;
}

.sv-global {
  left: 663px;
  top: 2px;
  width: 9px;
  height: 304px;
}

.band-global {
  top: 424px;
  right: 14px;
}

.sh-global {
  left: 3px;
  top: 432px;
  width: 639px;
  height: 9px;
}

/* editor toolbar */
.toolbar {
  height: 30px;
  flex-shrink: 0;
  display: flex;
  align-items: center;
  padding-left: 10px;
  background: linear-gradient(#d6d6d6, #b6b6b6);
}

.tb-layout {
  width: 108px;
  height: 14px;
}

.tb-sep {
  width: 1px;
  height: 14px;
  margin: 0 9px 0 2px;
  background: #c4c4c4;
}

.tb-sep.first {
  margin: 0 5px 0 14px;
}

.combo {
  width: 186px;
  height: 24px;
  display: flex;
  align-self: flex-start;
  margin-top: 5px;
  margin-right: 6px;
  box-sizing: border-box;
  border: 1px solid #a8a8a8;
  border-radius: 3px;
  background: #fff;
}

.combo-value {
  flex: 1;
  padding-left: 3px;
  line-height: 24px;
  font-size: 14px;
  color: #333;
}

.combo-arrow {
  width: 27px;
  position: relative;
  border-left: 1px solid #a8a8a8;
  background: linear-gradient(#ececec, #cfcfcf);
}

.combo-arrow::before {
  content: "";
  position: absolute;
  left: 8px;
  top: 9px;
  border: 5px solid transparent;
  border-top: 5px solid #666;
  border-bottom: 0;
}

.tb {
  width: 14px;
  height: 14px;
  margin-right: 10px;
}

.tb-gear {
  width: 16px;
  height: 12px;
  margin-right: 9px;
}

.tb-move {
  width: 15px;
  height: 14px;
  margin-right: 9px;
}

/* diagrams */
.canvas {
  position: relative;
  flex: 1;
  min-height: 0;
  overflow: hidden;
  background: #fff;
  font-family: "Liberation Sans", Arial, sans-serif;
  color: #1d1d1d;
}

.overlay {
  position: absolute;
  left: 0;
  top: 0;
}

.group {
  position: absolute;
  box-sizing: border-box;
  border: 1px solid #566a87;
  border-radius: 4px;
  background: #aec6e3;
}

.g-esx { left: 7px; top: 3px; width: 650px; height: 231px; }
.g-security { left: 13px; top: 17px; width: 411px; height: 228px; }

.group-label {
  position: absolute;
  font-size: 18px;
  font-weight: bold;
  color: #111;
}

.l-security { left: 173px; top: 217px; }

.title-box {
  left: 231px;
  top: 7px;
  width: 216px;
  height: 48px;
  display: flex;
  align-items: center;
  justify-content: center;
  font-size: 20px;
  font-weight: bold;
  color: #111;
}

.node {
  position: absolute;
  box-sizing: border-box;
  overflow: hidden;
}

.node-label {
  position: absolute;
  left: 0;
  right: 0;
  display: flex;
  flex-direction: column;
  align-items: center;
  justify-content: center;
  text-align: center;
  white-space: nowrap;
}

.node.big {
  width: 84px;
  height: 84px;
  border: 1px solid #c6dca6;
  border-radius: 4px;
  background: #95c060;
  font-size: 13px;
}

.node.big.warn {
  background: #dcaa66;
  border-color: #eccb9c;
}

.node.big .status {
  position: absolute;
  left: 62px;
  top: 4px;
  width: 16px;
  height: 16px;
  box-sizing: border-box;
  border: 1px solid #e6f0c8;
  border-radius: 4px;
  background: #85b800;
}

.node.big .node-label {
  top: 52px;
  height: 32px;
  line-height: 16px;
}

.node-icon {
  position: absolute;
  left: 25px;
  top: 4px;
  width: 32px;
  height: 32px;
}

.sensor-icon {
  position: absolute;
  left: 25px;
  top: 9px;
  width: 32px;
  height: 22px;
}

.node.small {
  width: 63px;
  height: 63px;
  border: 1px solid #c6e08e;
  border-radius: 2px;
  background: rgba(133, 190, 5, 0.6);
  font-size: 10px;
}

.node.small .status {
  position: absolute;
  left: 46px;
  top: 4px;
  width: 12px;
  height: 12px;
  box-sizing: border-box;
  border: 1px solid #cfe59a;
  border-radius: 2px;
  background: #85b800;
}

.node.small .node-label {
  top: 39px;
  height: 24px;
  line-height: 12px;
  color: #263012;
}

.svc-icon {
  position: absolute;
  left: 18px;
  top: 3px;
  width: 24px;
  height: 24px;
}

.n-sydney { left: 12px; top: 19px; }
.n-alger { left: 11px; top: 125px; }
.n-berlin { left: 555px; top: 19px; }
.n-hongkong { left: 550px; top: 125px; }

.c-1 { left: 19px; top: 25px; }
.c-2 { left: 113px; top: 25px; }
.c-3 { left: 19px; top: 119px; }
.c-4 { left: 113px; top: 119px; }
.p-1 { left: 237px; top: 30px; }
.p-2 { left: 331px; top: 30px; }
.p-3 { left: 237px; top: 124px; }
.p-4 { left: 331px; top: 124px; }

.s-lmtpd { left: 281px; top: 8px; }
.s-imapd { left: 148px; top: 34px; }
.s-mupdate { left: 418px; top: 24px; }
.s-eth0 { left: 525px; top: 78px; }
.s-ping { left: 53px; top: 96px; }
.s-memory { left: 18px; top: 180px; }
.s-mail { left: 283px; top: 180px; }
.s-cpu { left: 577px; top: 202px; }
.s-eth1 { left: 577px; top: 159px; }
.s-log { left: 53px; top: 263px; }
.s-create { left: 525px; top: 281px; }
.s-load { left: 148px; top: 326px; }
.s-cyrus { left: 281px; top: 352px; }
.s-var { left: 418px; top: 336px; }

.diagram-text text {
  font-family: "Liberation Sans", Arial, sans-serif;
  font-size: 14px;
  fill: #1d1d1d;
}

.diagram-text .group-title {
  font-size: 18px;
  font-weight: bold;
  fill: #111;
}

.chart-text text {
  font-family: "Liberation Sans", Arial, sans-serif;
  fill: #111;
}

.chart-text .yl {
  font-size: 15px;
  text-anchor: end;
}

.chart-text .xl {
  font-size: 14px;
  text-anchor: middle;
}

.chart-text .lg {
  font-size: 14.5px;
}

.chart-text .cap {
  font-size: 13px;
  text-anchor: middle;
}

.chart-text .unit {
  font-family: "DejaVu Sans", sans-serif;
  font-size: 10px;
  font-weight: bold;
  text-anchor: middle;
}

.axis path {
  fill: none;
  stroke: #333;
}

.axis .axis-main {
  stroke: #000;
  stroke-width: 1.5;
}

.ticks {
  stroke: #777;
}

.ticks.light {
  stroke: #b0b0b0;
}

.grid {
  stroke: #bdbdbd;
}

.grid-h {
  fill: none;
  stroke: #bdbdbd;
}

.grid.dim,
.grid-h.dim,
.ticks.dim {
  stroke: #a6b0bd;
}

.sel-box {
  fill: #e4eefa;
  stroke: #3a4a6a;
}

.handles rect {
  fill: #000;
}

.edges line {
  stroke: #666;
  stroke-width: 1;
}

.edges .heavy {
  stroke: #999;
  stroke-width: 2;
}

/* palette */
.palette {
  padding-top: 2px;
  flex: 1;
}

.pal-item {
  height: 24px;
  margin-left: 15px;
  padding-left: 2px;
  display: flex;
  align-items: center;
  gap: 4px;
  box-sizing: border-box;
  color: #3a3a3a;
}

.pal-item.hl {
  height: 21px;
  margin-top: 1.5px;
  margin-bottom: 1.5px;
  background: #cde2fb;
  border-radius: 2px;
}

.hl-line { width: 107px; }
.hl-rect { width: 106px; }

.pal-sep {
  height: 1px;
  margin: 3px 4px 5px;
  background: #a8a8a8;
}
```
